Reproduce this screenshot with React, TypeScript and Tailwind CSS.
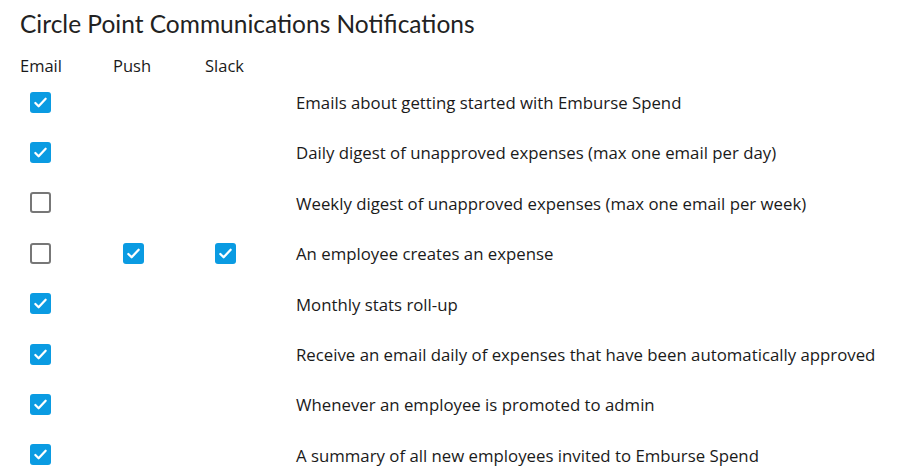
import React from 'react';

type Row = {
  label: string;
  email: boolean;
  push?: boolean;
  slack?: boolean;
};

const rows: Row[] = [
  { label: 'Emails about getting started with Emburse Spend', email: true },
  { label: 'Daily digest of unapproved expenses (max one email per day)', email: true },
  { label: 'Weekly digest of unapproved expenses (max one email per week)', email: false },
  { label: 'An employee creates an expense', email: false, push: true, slack: true },
  { label: 'Monthly stats roll-up', email: true },
  { label: 'Receive an email daily of expenses that have been automatically approved', email: true },
  { label: 'Whenever an employee is promoted to admin', email: true },
  { label: 'A summary of all new employees invited to Emburse Spend', email: true },
];

const Box: React.FC<{ checked: boolean }> = ({ checked }) =>
  checked ? (
    <span className="ml-[10px] flex h-[21px] w-[21px] items-center justify-center rounded-[3px] bg-[#0a9be2]">
      <svg width="15" height="15" viewBox="0 0 16 16" fill="none">
        <path d="M2.5 8.5l3.5 3.5 7.5-8" stroke="white" strokeWidth="2.4" strokeLinecap="round" strokeLinejoin="round" />
      </svg>
    </span>
  ) : (
    <span className="ml-[10px] block h-[21px] w-[21px] rounded-[3px] border-2 border-[#777]" />
  );

export default function App() {
  return (
    <div className="bg-white px-5 pt-[8px] text-[#1a1a1a]" style={{ fontFamily: '"Open Sans", sans-serif' }}>
      <h1 className="text-[24.5px] leading-[32px] text-[#222]" style={{ fontFamily: 'Lato, sans-serif' }}>
        Circle Point Communications Notifications
      </h1>
      <div className="mt-[15px] grid grid-cols-[93px_92px_91px_1fr] text-[16.5px] leading-[22px]">
        <div>Email</div>
        <div>Push</div>
        <div>Slack</div>
        <div />
      </div>
      <div className="flex flex-col">
        {rows.map((r) => (
          <div key={r.label} className="grid h-[50.4px] grid-cols-[93px_92px_91px_1fr] items-center text-[16.8px]">
            <div>
              <Box checked={r.email} />
            </div>
            <div>{r.push && <Box checked />}</div>
            <div>{r.slack && <Box checked />}</div>
            <div className="pt-[1px]">{r.label}</div>
          </div>
        ))}
      </div>
    </div>
  );
}
